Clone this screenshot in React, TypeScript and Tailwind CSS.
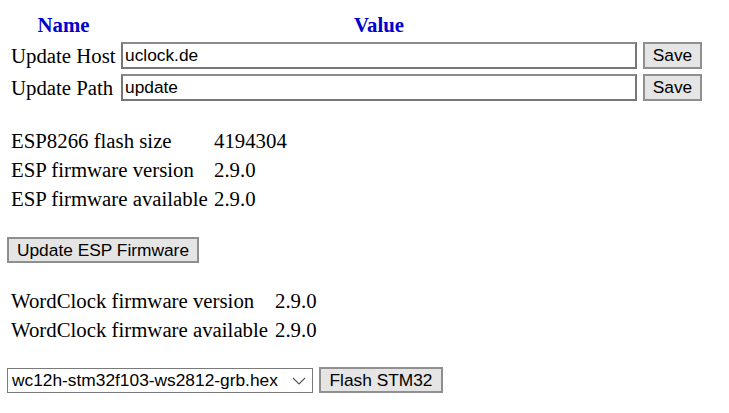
import React from "react";

export default function App() {
  return (
    <div className="w-[729px] h-[413px] bg-white text-black text-[20.8px] leading-[23px] overflow-hidden pt-[11px] font-['Liberation_Serif',serif]">
      {/* Settings table */}
      <div className="flex flex-col gap-[5px]">
        <div className="flex h-[26px] items-center font-bold text-[#0000cd]">
          <div className="w-[121px] shrink-0 pl-[11px] pr-[5px] text-center">Name</div>
          <div className="w-[516px] shrink-0 text-center">Value</div>
        </div>
        {[
          ["Update Host", "uclock.de"],
          ["Update Path", "update"],
        ].map(([label, value]) => (
          <div key={label} className="flex items-center h-[27px]">
            <div className="w-[121px] shrink-0 pl-[11px] whitespace-nowrap">{label}</div>
            <input
              defaultValue={value}
              className="w-[516px] shrink-0 h-[27px] border-2 border-[#767676] border-t-[#8a8a8a] bg-white px-[2px] text-[17.33px] font-['Liberation_Sans',Arial,sans-serif] text-black outline-none"
            />
            <button className="ml-[6px] shrink-0 w-[59px] h-[27px] border-2 border-[#8f8f8f] bg-[#e5e5e5] text-[17.33px] font-['Liberation_Sans',Arial,sans-serif] text-black flex items-center justify-center">
              Save
            </button>
          </div>
        ))}
      </div>

      {/* ESP info */}
      <div className="mt-[28px] grid grid-cols-[214px_auto] auto-rows-[29px] items-start">
        <div className="pl-[11px] whitespace-nowrap">ESP8266 flash size</div>
        <div>4194304</div>
        <div className="pl-[11px] whitespace-nowrap">ESP firmware version</div>
        <div>2.9.0</div>
        <div className="pl-[11px] whitespace-nowrap">ESP firmware available</div>
        <div>2.9.0</div>
      </div>

      <div className="pl-[7px] mt-[21px]">
        <button className="w-[192px] h-[26px] border-2 border-[#8f8f8f] bg-[#e5e5e5] text-[17.33px] font-['Liberation_Sans',Arial,sans-serif] text-black flex items-center justify-center">
          Update ESP Firmware
        </button>
      </div>

      {/* WordClock info */}
      <div className="mt-[26px] grid grid-cols-[275px_auto] auto-rows-[29px] items-start">
        <div className="pl-[11px] whitespace-nowrap">WordClock firmware version</div>
        <div>2.9.0</div>
        <div className="pl-[11px] whitespace-nowrap">WordClock firmware available</div>
        <div>2.9.0</div>
      </div>

      <div className="pl-[7px] mt-[20px] flex items-center gap-[6px]">
        <div className="relative w-[306px] h-[25px] border border-[#7a7a7a] bg-white flex items-center font-['Liberation_Sans',Arial,sans-serif] text-[17.33px]">
          <span className="pl-[4px]">wc12h-stm32f103-ws2812-grb.hex</span>
          <svg
            className="absolute right-[6px] top-[8px]"
            width="14"
            height="8"
            viewBox="0 0 14 8"
            fill="none"
            stroke="#555"
            strokeWidth="1.1"
          >
            <path d="M1 1 L7 7 L13 1" />
          </svg>
        </div>
        <button className="w-[124px] h-[26px] border-2 border-[#8f8f8f] bg-[#e5e5e5] text-[17.33px] font-['Liberation_Sans',Arial,sans-serif] text-black flex items-center justify-center">
          Flash STM32
        </button>
      </div>
    </div>
  );
}
